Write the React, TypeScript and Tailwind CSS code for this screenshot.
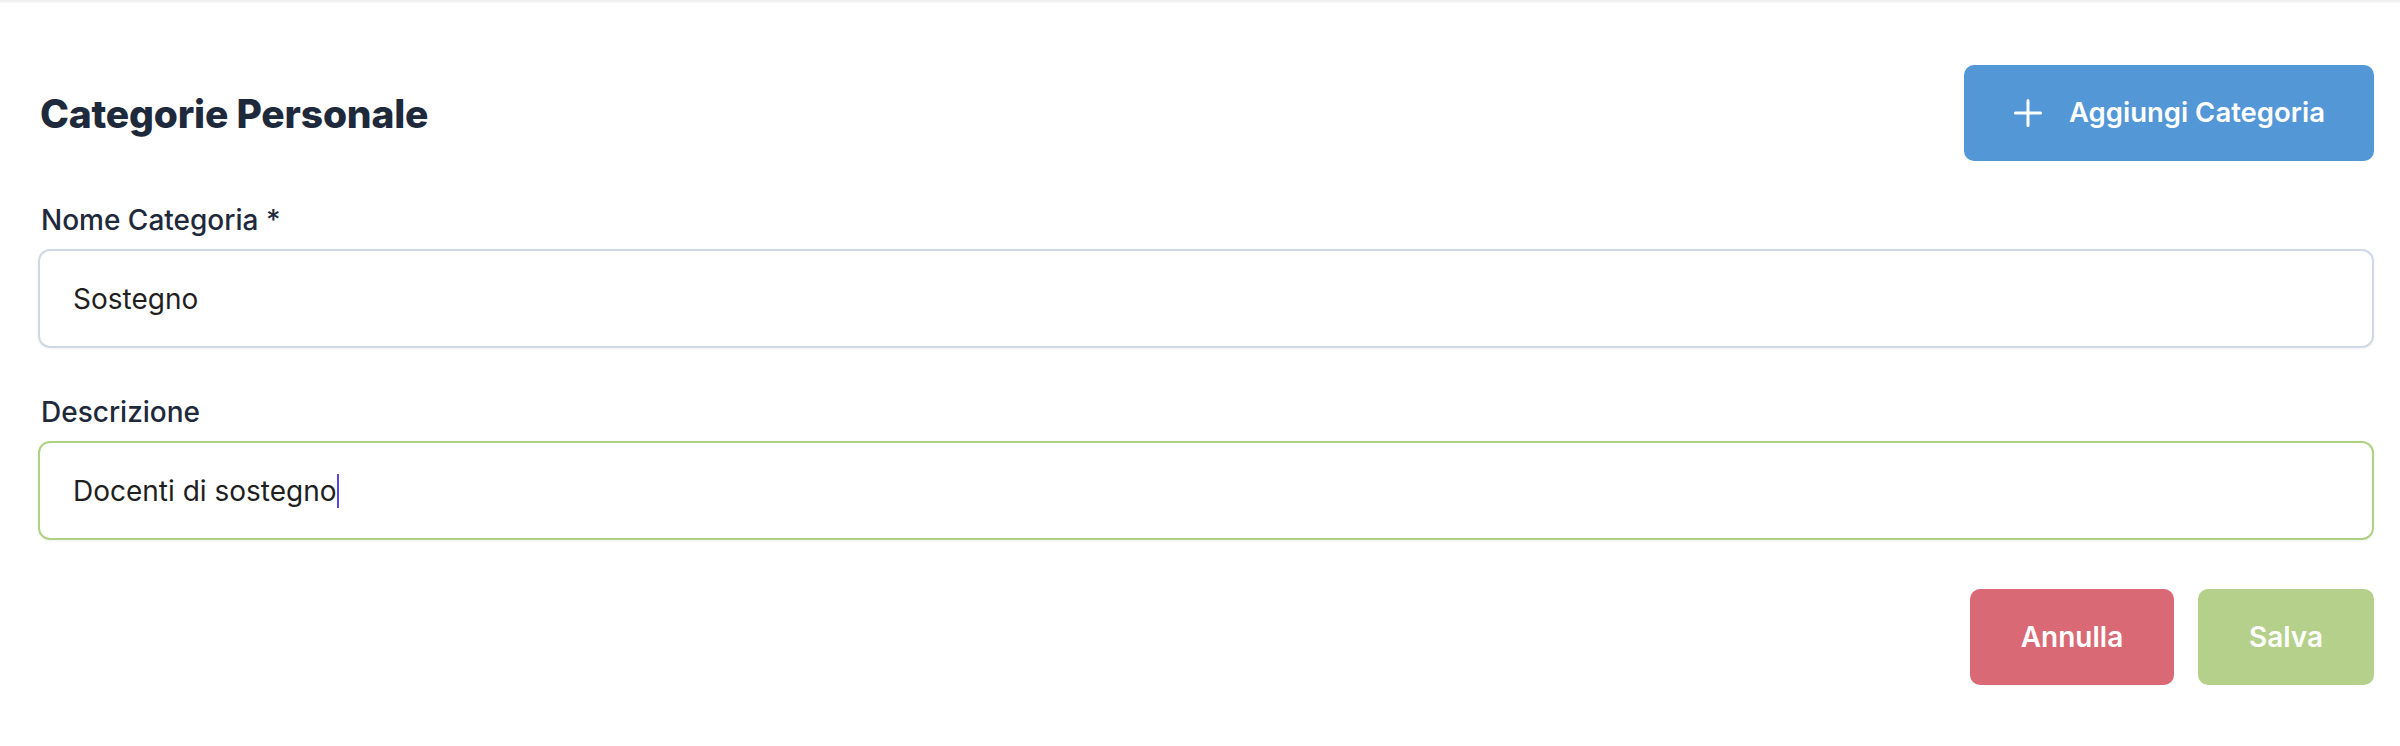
import React from "react";

export default function App() {
  return (
    <div className="w-[2400px] h-[746px] bg-white font-['Inter',sans-serif] overflow-hidden">
      <div className="h-[3px] bg-gradient-to-b from-[#ececec] to-[#fafafa]" />
      <div className="pl-[38px] pr-[26px] pt-[62px]">
        <div className="flex items-center justify-between">
          <h1 className="text-[39px] font-extrabold text-[#1e293b] tracking-[-0.2px] leading-none pl-[2px]">
            Categorie Personale
          </h1>
          <button className="h-[96px] flex items-center gap-[27px] pl-[50px] pr-[49px] rounded-[10px] bg-[#5397d6] text-white text-[27.5px] font-semibold">
            <svg width="28" height="28" viewBox="0 0 28 28" fill="none" stroke="currentColor" strokeWidth="3" strokeLinecap="round">
              <path d="M14 1.5v25M1.5 14h25" />
            </svg>
            <span>Aggiungi Categoria</span>
          </button>
        </div>

        <div className="mt-[41px] flex flex-col">
          <label className="text-[28px] leading-[36px] font-medium text-[#1e293b] pl-[3px]">
            Nome Categoria *
          </label>
          <div className="mt-[11px] h-[99px] rounded-[12px] border-[2px] border-[#cfd8e4] shadow-[0_1px_3px_rgba(0,0,0,0.06)] flex items-center pl-[33px] text-[28px] text-[#1f1f1f]">
            Sostegno
          </div>

          <label className="mt-[46px] text-[28px] leading-[36px] font-medium text-[#1e293b] pl-[3px]">
            Descrizione
          </label>
          <div className="mt-[11px] h-[99px] rounded-[12px] border-[2px] border-[#aed184] shadow-[0_1px_3px_rgba(0,0,0,0.06)] flex items-center pl-[33px] text-[28px] text-[#1f1f1f]">
            <span>Docenti di sostegno</span>
            <span className="inline-block w-[2px] h-[34px] bg-[#5547e0]" />
          </div>
        </div>

        <div className="mt-[49px] flex justify-end gap-[24px]">
          <button className="h-[96px] w-[204px] rounded-[10px] bg-[#d96a75] text-white text-[28px] font-semibold">
            Annulla
          </button>
          <button className="h-[96px] w-[176px] rounded-[10px] bg-[#b5d08b] text-white text-[28px] font-semibold">
            Salva
          </button>
        </div>
      </div>
    </div>
  );
}
